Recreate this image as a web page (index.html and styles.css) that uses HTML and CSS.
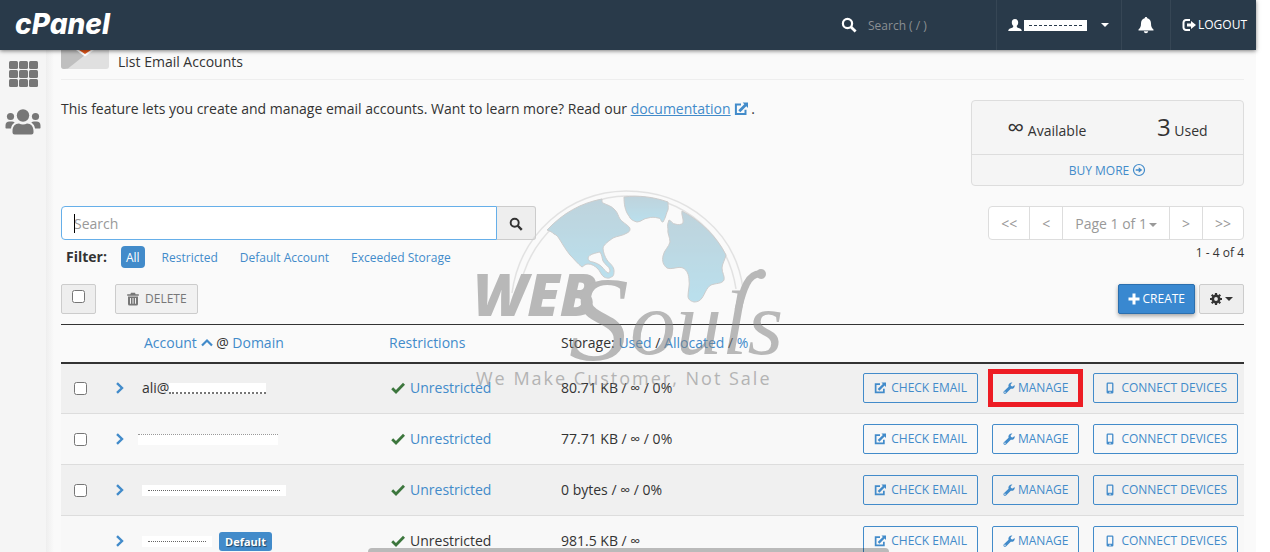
FILE: index.html
```html
<!DOCTYPE html>
<html lang="en">
<head>
  <meta charset="UTF-8">
  <meta name="viewport" content="width=device-width, initial-scale=1.0">
  <title>cPanel - List Email Accounts</title>
  <link rel="stylesheet" href="styles.css">
</head>
<body>
  <!-- Icon set -->
  <svg class="sprite" aria-hidden="true">
    <symbol id="i-search" viewBox="0 0 16 16"><circle cx="6.5" cy="6.5" r="4.6" fill="none" stroke="currentColor" stroke-width="2.2"/><path d="M10 10l4.6 4.6" stroke="currentColor" stroke-width="2.8"/></symbol>
    <symbol id="i-user" viewBox="0 0 14 14"><path d="M7 1c2.2 0 3.2 1.6 3.2 3.4 0 1.5-.6 2.6-1.4 3.4v.9c0 .5.4.8 1 1 2 .6 4 1.3 4 3.3H.2c0-2 2-2.7 4-3.3.6-.2 1-.5 1-1v-.9C4.4 7 3.8 5.9 3.8 4.4 3.8 2.6 4.8 1 7 1z" fill="currentColor"/></symbol>
    <symbol id="i-bell" viewBox="0 0 16 18"><path d="M8 1c.7 0 1.2.4 1.3 1.2C12 2.9 13 5 13 7.5c0 3.5 1 4.5 2.5 6v1H.5v-1C2 12 3 11 3 7.5c0-2.5 1-4.6 3.7-5.300C6.800 1.400 7.300 1 8 1zM5.800 15.300h4.400C10 16.600 9.200 17.300 8 17.300s-2-.7-2.200-2z" fill="currentColor"/></symbol>
    <symbol id="i-logout" viewBox="0 0 14 14"><path d="M8 2H4a2.500 2.500 0 0 0-2.500 2.500v5A2.500 2.500 0 0 0 4 12h4" fill="none" stroke="currentColor" stroke-width="2"/><path d="M5 5.500h4V3l5 4-5 4V8.500H5z" fill="currentColor"/></symbol>
    <symbol id="i-ext" viewBox="0 0 14 14"><path d="M7 2.500H1.900v9.600h9.600V7.800" fill="none" stroke="currentColor" stroke-width="2"/><path d="M4.300 8.200l6-6L8.700.6H14v5.300l-1.700-1.700-6 6z" fill="currentColor"/></symbol>
    <symbol id="i-wrench" viewBox="0 0 14 14"><path d="M13.500 3.400c.4 1.500 0 2.900-1.100 3.800-1 .8-2.200 1-3.300.6L3.500 13.300c-.7.7-1.800.7-2.500 0s-.7-1.700 0-2.400l5.500-5.500C6.100 4.200 6.400 2.800 7.400 1.800 8.500.7 9.800.4 11 .7L8.900 2.900l.4 1.900 2 .5zM2.300 11.200a.8.8 0 1 0 .01 1.600.8.8 0 0 0-.01-1.600z" fill="currentColor"/></symbol>
    <symbol id="i-phone" viewBox="0 0 14 14"><path d="M4.500.5h5a1.500 1.500 0 0 1 1.500 1.500v10a1.500 1.500 0 0 1-1.500 1.500h-5A1.500 1.500 0 0 1 3 12V2A1.500 1.500 0 0 1 4.500.5zM4.500 2v8.300h5V2zM7 11.200a.8.8 0 1 0 .01 1.600.8.8 0 0 0-.01-1.600z" fill="currentColor" fill-rule="evenodd"/></symbol>
    <symbol id="i-check" viewBox="0 0 14 12"><path d="M1.200 6.300l3.800 3.700 8-8.200" fill="none" stroke="currentColor" stroke-width="2.800"/></symbol>
    <symbol id="i-right" viewBox="0 0 10 12"><path d="M2 1.200L7 6l-5 4.800" fill="none" stroke="currentColor" stroke-width="2.400"/></symbol>
    <symbol id="i-up" viewBox="0 0 12 10"><path d="M1 7.500l5-5 5 5" fill="none" stroke="currentColor" stroke-width="2.200"/></symbol>
    <symbol id="i-circle-right" viewBox="0 0 14 14"><circle cx="7" cy="7" r="5.500" fill="none" stroke="currentColor" stroke-width="1.200"/><path d="M3.700 6.200h3V4.200L10.300 7 6.700 9.800v-2h-3z" fill="currentColor"/></symbol>
    <symbol id="i-trash" viewBox="0 0 14 14"><path d="M5 .8h4l.6 1.400h3.200v1.600H1.200V2.200h3.200zM2 4.600h10V12a1.500 1.500 0 0 1-1.500 1.500h-7A1.500 1.500 0 0 1 2 12zM4 6v5.800h1V6zm2.500 0v5.800h1V6zM9 6v5.800h1V6z" fill="currentColor" fill-rule="evenodd"/></symbol>
    <symbol id="i-plus" viewBox="0 0 12 12"><path d="M6 .5v11M.5 6h11" stroke="currentColor" stroke-width="3"/></symbol>
    <symbol id="i-cog" viewBox="0 0 12 12"><circle cx="6" cy="6" r="3.200" fill="none" stroke="currentColor" stroke-width="2.600"/><path d="M6 0v2M6 10v2M0 6h2M10 6h2M1.760 1.760l1.400 1.400M8.840 8.840l1.400 1.400M1.760 10.240l1.400-1.400M8.840 3.160l1.400-1.400" stroke="currentColor" stroke-width="2.200"/></symbol>
    <symbol id="i-grid" viewBox="0 0 29 26"><g fill="currentColor"><rect width="9" height="8" rx="1.500"/><rect x="10" width="9" height="8" rx="1.500"/><rect x="20" width="9" height="8" rx="1.500"/><rect y="9" width="9" height="8" rx="1.500"/><rect x="10" y="9" width="9" height="8" rx="1.500"/><rect x="20" y="9" width="9" height="8" rx="1.500"/><rect y="18" width="9" height="8" rx="1.500"/><rect x="10" y="18" width="9" height="8" rx="1.500"/><rect x="20" y="18" width="9" height="8" rx="1.500"/></g></symbol>
    <symbol id="i-users" viewBox="0 0 36 26"><g fill="currentColor"><circle cx="18" cy="6.500" r="6.200"/><circle cx="5.500" cy="7.500" r="3.600"/><circle cx="30.500" cy="7.500" r="3.600"/><path d="M7.500 25.500V22c0-4.500 2.500-7.500 6.500-7.500 1.200.7 2.500 1 4 1s2.800-.3 4-1c4 0 6.500 3 6.500 7.500v1.500a2 2 0 0 1-2 2h-17a2 2 0 0 1-2-2z"/><path d="M.5 19v-2.500c0-2.500 1.500-4 4-4H7c1 0 2 .4 2.700 1C7.500 15 6.300 16.800 6 19.500H1zM35.500 19v-2.500c0-2.500-1.500-4-4-4H29c-1 0-2 .4-2.700 1C28.500 15 29.700 16.800 30 19.500h5z"/></g></symbol>
  </svg>

  <header class="topbar">
    <a class="brand" href="#">cPanel</a>
    <label class="topbar-search">
      <svg class="icon icon-lg"><use href="#i-search"/></svg>
      <input type="text" placeholder="Search ( / )" aria-label="Quick search">
    </label>
    <a class="topbar-item topbar-user" href="#" aria-label="Account">
      <svg class="icon"><use href="#i-user"/></svg>
      <span class="masked masked-user"></span>
      <span class="caret"></span>
    </a>
    <a class="topbar-item topbar-bell" href="#" aria-label="Notifications"><svg class="icon icon-bell"><use href="#i-bell"/></svg></a>
    <a class="topbar-item topbar-logout" href="#"><svg class="icon"><use href="#i-logout"/></svg>LOGOUT</a>
  </header>

  <div class="layout">
    <nav class="sidebar">
      <a href="#" aria-label="Tools"><svg class="side-grid"><use href="#i-grid"/></svg></a>
      <a href="#" aria-label="User Manager"><svg class="side-users"><use href="#i-users"/></svg></a>
    </nav>

    <main class="content">
      <div class="page-title">
        <svg class="mail-icon" viewBox="0 0 48 20">
          <path d="M0 0h48v16a3 3 0 0 1-3 3H3a3 3 0 0 1-3-3z" fill="#e0e0e0"/>
          <path d="M0 0h18l6 5L7 18.500 3 19a3 3 0 0 1-3-3z" fill="#bfbfbf"/>
          <path d="M15 0h18l-9 6.500z" fill="#fff"/>
          <path d="M18 0h12l-6 4z" fill="#e8591c"/>
        </svg>
        <h1>List Email Accounts</h1>
      </div>

      <div class="intro">
        <p>This feature lets you create and manage email accounts. Want to learn more? Read our <a class="doc-link" href="#">documentation</a><svg class="icon doc-icon"><use href="#i-ext"/></svg> .</p>
        <div class="stats">
          <div class="stats-row">
            <div><span class="stat-num">∞</span> Available</div>
            <div><span class="stat-num">3</span> Used</div>
          </div>
          <a class="buy-more" href="#">BUY MORE <svg class="icon"><use href="#i-circle-right"/></svg></a>
        </div>
      </div>

      <div class="search-row">
        <div class="search-group">
          <input type="text" placeholder="Search" aria-label="Search accounts">
          <button type="button" aria-label="Search"><svg class="icon"><use href="#i-search"/></svg></button>
          <span class="text-cursor"></span>
        </div>
        <div class="pager">
          <button type="button">&lt;&lt;</button>
          <button type="button">&lt;</button>
          <button type="button">Page 1 of 1<span class="caret"></span></button>
          <button type="button">&gt;</button>
          <button type="button">&gt;&gt;</button>
        </div>
      </div>

      <div class="filter-row">
        <strong>Filter:</strong>
        <a class="active" href="#">All</a>
        <a href="#">Restricted</a>
        <a href="#">Default Account</a>
        <a href="#">Exceeded Storage</a>
        <span class="count">1 - 4 of 4</span>
      </div>

      <div class="toolbar">
        <label class="btn btn-grey select-all"><input type="checkbox" aria-label="Select all"></label>
        <button class="btn btn-grey btn-delete" type="button" disabled><svg class="icon"><use href="#i-trash"/></svg>DELETE</button>
        <button class="btn btn-primary" type="button"><svg class="icon icon-sm"><use href="#i-plus"/></svg>CREATE</button>
        <button class="btn btn-grey btn-cog" type="button" aria-label="Settings"><svg class="icon icon-sm"><use href="#i-cog"/></svg><span class="caret"></span></button>
      </div>

      <table class="accounts">
        <colgroup>
          <col class="c-check"><col class="c-expand"><col class="c-account"><col class="c-restrict"><col class="c-storage"><col>
        </colgroup>
        <thead>
          <tr>
            <th></th>
            <th></th>
            <th class="th-account"><a href="#">Account <svg class="icon icon-sm"><use href="#i-up"/></svg></a> @ <a href="#">Domain</a></th>
            <th><a href="#">Restrictions</a></th>
            <th>Storage: <a href="#">Used</a> / <a href="#">Allocated</a> / <a href="#">%</a></th>
            <th></th>
          </tr>
        </thead>
        <tbody>
          <tr>
            <td><input type="checkbox" aria-label="Select account"></td>
            <td><a class="expand" href="#" aria-label="Expand"><svg><use href="#i-right"/></svg></a></td>
            <td><div class="account">ali@<span class="masked masked-a"></span></div></td>
            <td><svg class="icon check"><use href="#i-check"/></svg><a href="#">Unrestricted</a></td>
            <td>80.71 KB / ∞ / 0%</td>
            <td>
              <div class="actions">
                <button class="btn btn-outline" type="button"><svg class="icon icon-sm"><use href="#i-ext"/></svg>CHECK EMAIL</button>
                <button class="btn btn-outline btn-manage marked" type="button"><svg class="icon icon-sm"><use href="#i-wrench"/></svg>MANAGE</button>
                <button class="btn btn-outline" type="button"><svg class="icon icon-sm"><use href="#i-phone"/></svg>CONNECT DEVICES</button>
              </div>
            </td>
          </tr>
          <tr>
            <td><input type="checkbox" aria-label="Select account"></td>
            <td><a class="expand" href="#" aria-label="Expand"><svg><use href="#i-right"/></svg></a></td>
            <td><div class="account"><span class="masked masked-b"></span></div></td>
            <td><svg class="icon check"><use href="#i-check"/></svg><a href="#">Unrestricted</a></td>
            <td>77.71 KB / ∞ / 0%</td>
            <td>
              <div class="actions">
                <button class="btn btn-outline" type="button"><svg class="icon icon-sm"><use href="#i-ext"/></svg>CHECK EMAIL</button>
                <button class="btn btn-outline btn-manage" type="button"><svg class="icon icon-sm"><use href="#i-wrench"/></svg>MANAGE</button>
                <button class="btn btn-outline" type="button"><svg class="icon icon-sm"><use href="#i-phone"/></svg>CONNECT DEVICES</button>
              </div>
            </td>
          </tr>
          <tr>
            <td><input type="checkbox" aria-label="Select account"></td>
            <td><a class="expand" href="#" aria-label="Expand"><svg><use href="#i-right"/></svg></a></td>
            <td><div class="account"><span class="masked masked-c"></span></div></td>
            <td><svg class="icon check"><use href="#i-check"/></svg><a href="#">Unrestricted</a></td>
            <td>0 bytes / ∞ / 0%</td>
            <td>
              <div class="actions">
                <button class="btn btn-outline" type="button"><svg class="icon icon-sm"><use href="#i-ext"/></svg>CHECK EMAIL</button>
                <button class="btn btn-outline btn-manage" type="button"><svg class="icon icon-sm"><use href="#i-wrench"/></svg>MANAGE</button>
                <button class="btn btn-outline" type="button"><svg class="icon icon-sm"><use href="#i-phone"/></svg>CONNECT DEVICES</button>
              </div>
            </td>
          </tr>
          <tr>
            <td></td>
            <td><a class="expand" href="#" aria-label="Expand"><svg><use href="#i-right"/></svg></a></td>
            <td><div class="account"><span class="masked masked-d"></span><span class="badge">Default</span></div></td>
            <td><svg class="icon check"><use href="#i-check"/></svg>Unrestricted</td>
            <td>981.5 KB / ∞</td>
            <td>
              <div class="actions">
                <button class="btn btn-outline" type="button"><svg class="icon icon-sm"><use href="#i-ext"/></svg>CHECK EMAIL</button>
                <button class="btn btn-outline btn-manage" type="button"><svg class="icon icon-sm"><use href="#i-wrench"/></svg>MANAGE</button>
                <button class="btn btn-outline" type="button"><svg class="icon icon-sm"><use href="#i-phone"/></svg>CONNECT DEVICES</button>
              </div>
            </td>
          </tr>
        </tbody>
      </table>
    </main>
  </div>

  <!-- Watermark over the page -->
  <svg class="watermark" viewBox="0 0 320 210" aria-hidden="true">
    <defs>
      <linearGradient id="land" x1="0" y1="0" x2="0" y2="1">
        <stop offset="0" stop-color="#8fb4c4"/>
        <stop offset="1" stop-color="#86cbe4"/>
      </linearGradient>
    </defs>
    <g fill="none" stroke="#d0d0d0" stroke-width="1.500">
      <path d="M37 103C45 44 93 2 151 1c62 0 110 42 117 98"/>
      <path d="M44 103C52 50 97 7 152 6c58 0 101 40 109 93"/>
    </g>
    <g fill="url(#land)" stroke="#a8a8a8" stroke-width="1" stroke-linejoin="round">
      <path fill-rule="evenodd" d="M72 40C88 23 106 13 127 9c0 3 0 3 1 4 4 2 9 3 12 7 3 3 3 6 5 9 3 4 10 7 10 10 0 2-1 3-3 4-5 3-10 3-14 5-4 3-9 6-10 10 0 4 2 9 4 12 3 4 7 6 7 11 0 4-1 6-3 6-2 2-5 1-7 0-3-2-4-6-6-8-3-3-6-5-10-5-3 0-4 2-6 3-4-3-8-8-12-12-4-5-7-10-10-15-2-3-3-5-6-6-2-2-4-3-7-4zM113 68c1-4 8-5 12-6 2 3 2 6 3 9 2 4 6 5 7 9 0 2-1 3-2 3-2-1-4-4-6-6-3-3-6-4-9-5-3 0-5-2-5-4z"/>
      <path d="M149 7c15-2 30 0 44 5 0 5 1 7-1 10-1 3-2 7-4 10-3 0-1-4-5-4-3-1-7-1-10 0-4 0-7 4-11 4-4-1-7-3-8-6-4-5-5-12-5-19z"/>
      <path d="M207 21c19 10 35 26 44 44-1 5-4 9-4 13 0 5 3 8 2 12-2 4-8 3-13 5-5 3-6 9-9 13-2 3-5 4-8 4-4-1-6-3-6-6 0-5 2-11 1-16 0-5-2-10-6-12-5-2-11 2-16 0-4-3-5-7-4-12 1-6 6-9 7-14 0-5-3-9-2-13-1-4 0-6 1-9 3 1 3 4 6 4 3 1 6 1 8-1 1-4-2-8-1-12z"/>
    </g>
    <g fill="#838383">
      <text class="wm-web" x="-2" y="126">WEB</text>
      <text class="wm-s" x="94" y="170">S</text>
      <text class="wm-ouls" x="155" y="164">ouls</text>
    </g>
    <path d="M263 120c5-20 10-38 24-36" fill="none" stroke="#838383" stroke-width="7"/>
    <circle cx="286" cy="84" r="5" fill="#838383"/>
    <text class="wm-tag" x="1" y="195" fill="#838383">We Make Customer, Not Sale</text>
  </svg>
  <div class="bottom-shade"></div>
</body>
</html>
```
FILE: styles.css
```css
* {
  box-sizing: border-box;
}

body {
  margin: 0;
  padding-right: 14px;
  height: 100vh;
  overflow: hidden;
  display: flex;
  flex-direction: column;
  background: #fff;
  color: #333;
  font-family: "Open Sans", sans-serif;
  font-size: 14px;
  line-height: 20px;
}

a {
  color: #428bca;
  text-decoration: none;
}

button,
input {
  font-family: inherit;
  font-size: inherit;
}

input[type="checkbox"] {
  width: 13px;
  height: 13px;
  margin: 0;
}

.sprite {
  display: none;
}

.icon {
  width: 14px;
  height: 14px;
  flex: none;
  vertical-align: -2px;
}

.icon-sm {
  width: 12px;
  height: 12px;
  vertical-align: -1px;
}

.icon-lg {
  width: 16px;
  height: 16px;
}

.caret {
  display: inline-block;
  border: 4px solid transparent;
  border-top-color: currentColor;
  border-bottom: 0;
}

/* Top bar */
.topbar {
  position: relative;
  z-index: 2;
  flex: none;
  display: flex;
  align-items: stretch;
  height: 50px;
  background: #293a4a;
  box-shadow: 0 1px 4px rgba(0, 0, 0, 0.5);
}

.brand {
  margin-right: auto;
  padding-left: 15px;
  color: #fff;
  font-family: Inter, sans-serif;
  font-size: 28px;
  font-style: italic;
  font-weight: 800;
  line-height: 48px;
}

.topbar-search {
  display: flex;
  align-items: center;
  gap: 11px;
  width: 155px;
  color: #fff;
}

.topbar-search input {
  width: 110px;
  padding: 0;
  border: 0;
  background: none;
  color: #fff;
  font-size: 12px;
}

.topbar-search input::placeholder {
  color: #8b8f93;
}

.topbar-item {
  display: flex;
  align-items: center;
  padding: 0 11px;
  border-left: 1px solid #364655;
  color: #fff;
  font-size: 12px;
}

.topbar-user {
  width: 125px;
}

.topbar-user .caret {
  margin-left: 14px;
}

.topbar-bell {
  width: 49px;
  padding: 0 16px;
}

.icon-bell {
  width: 16px;
  height: 18px;
}

.topbar-logout {
  gap: 2px;
  width: 86px;
  padding-right: 0;
}

/* Hidden account names */
.masked {
  flex: none;
  height: 11px;
  background: #fff;
}

.masked-user {
  display: flex;
  align-items: center;
  width: 63px;
  margin-left: 2px;
}

.masked-user::before {
  content: "";
  flex: 1;
  margin: 0 5px;
  border-top: 1px dashed #293a4a;
}

.masked-a {
  width: 97px;
  border-bottom: 2px dotted #777;
}

.masked-b {
  width: 140px;
  margin-left: -4px;
  border-top: 1px dotted #999;
}

.masked-c,
.masked-d {
  display: flex;
  align-items: center;
  width: 144px;
}

.masked-d {
  width: 70px;
}

.masked-c::before,
.masked-d::before {
  content: "";
  flex: 1;
  margin: 0 6px;
  border-top: 1px dotted #666;
}

/* Layout */
.layout {
  flex: 1;
  min-height: 0;
  display: flex;
}

.sidebar {
  flex: none;
  display: flex;
  flex-direction: column;
  align-items: center;
  gap: 22px;
  width: 46px;
  padding-top: 11px;
  background: #f5f5f5;
  box-shadow: 1px 0 5px rgba(0, 0, 0, 0.35);
}

.sidebar a {
  display: flex;
  color: #777;
}

.side-grid {
  width: 29px;
  height: 26px;
}

.side-users {
  width: 36px;
  height: 26px;
}

.content {
  flex: 1;
  min-width: 0;
  padding: 0 12px 0 15px;
  background: linear-gradient(90deg, #eee, #fafafa 8px);
}

.page-title {
  display: flex;
  align-items: flex-start;
  gap: 9px;
  height: 30px;
  border-bottom: 1px solid #eee;
}

.page-title h1 {
  margin: 2px 0 0;
  font-size: 14px;
  font-weight: 400;
}

.mail-icon {
  width: 48px;
  height: 20px;
}

.intro {
  display: flex;
  justify-content: space-between;
  align-items: flex-start;
  padding: 19px 0 20px;
}

.intro p {
  margin: 0;
}

.doc-link {
  text-decoration: underline;
}

.doc-icon {
  margin-left: 3px;
  color: #428bca;
}

.stats {
  width: 273px;
  margin-top: 1px;
  border: 1px solid #ddd;
  border-radius: 4px;
  background: #f5f5f5;
}

.stats-row {
  display: flex;
  justify-content: space-around;
  align-items: center;
  height: 54px;
  padding-top: 2px;
  border-bottom: 1px solid #ddd;
}

.stat-num {
  font-size: 24px;
}

.buy-more {
  display: block;
  padding: 6px 0 4px;
  font-size: 12px;
  text-align: center;
}

/* Search and pager */
.search-row {
  display: flex;
  justify-content: space-between;
}

.search-group {
  position: relative;
  display: flex;
  width: 475px;
  height: 34px;
}

.search-group input {
  flex: 1;
  min-width: 0;
  padding: 0 12px;
  border: 1px solid #66afe9;
  border-radius: 4px 0 0 4px;
  background: #fff;
}

.search-group input::placeholder {
  color: #999;
}

.search-group button {
  width: 39px;
  padding: 0;
  border: 1px solid #ccc;
  border-left: 0;
  border-radius: 0 3px 3px 0;
  background: #eee;
  color: #333;
}

/* Insertion point */
.text-cursor {
  position: absolute;
  top: 8px;
  left: 13px;
  width: 1px;
  height: 19px;
  background: #000;
}

.pager {
  display: flex;
  border: 1px solid #ddd;
  border-radius: 4px;
  background: #fff;
}

.pager button {
  padding: 0 12px;
  border: 0;
  border-left: 1px solid #ddd;
  background: none;
  color: #999;
}

.pager button:first-child {
  border-left: 0;
}

.pager .caret {
  margin-left: 2px;
  vertical-align: 2px;
}

.filter-row {
  display: flex;
  align-items: center;
  gap: 12px;
  padding: 6px 0 0 5px;
  font-size: 12px;
}

.filter-row strong {
  font-size: 14px;
}

.filter-row a {
  padding: 2px 5px 0;
  border-radius: 4px;
}

.filter-row .active {
  margin-left: 2px;
  background: #428bca;
  color: #fff;
}

.count {
  align-self: flex-start;
  margin-left: auto;
  line-height: 14px;
}

/* Buttons */
.btn {
  display: inline-flex;
  align-items: center;
  justify-content: center;
  gap: 5px;
  height: 30px;
  padding: 0 10px;
  border: 1px solid #ccc;
  border-radius: 2px;
  font-size: 12px;
  line-height: 18px;
  white-space: nowrap;
}

.btn-grey {
  background: #eee;
  color: #333;
}

.btn-primary {
  gap: 3px;
  margin-left: auto;
  padding: 0 9px;
  border-color: #2b6fae;
  background: #3988d0;
  color: #fff;
  box-shadow: 0 2px 4px rgba(0, 0, 0, 0.35);
}

.btn-outline {
  border-color: #428bca;
  background: transparent;
  color: #428bca;
}

.btn-manage {
  gap: 3px;
}

.btn-delete {
  margin-left: 15px;
  background: #f1f1f1;
  color: #777;
}

.btn-cog {
  gap: 3px;
}

.marked {
  border-radius: 0;
  outline: 5px solid #ed1c24;
  outline-offset: -1px;
}

.toolbar {
  display: flex;
  gap: 4px;
  padding: 16px 0 10px;
}

.select-all {
  width: 35px;
  align-items: flex-start;
  padding-top: 5px;
}

/* Accounts table */
.accounts {
  width: 100%;
  table-layout: fixed;
  border-collapse: collapse;
  border-top: 1px solid #333;
}

.c-check {
  width: 48px;
}

.c-expand {
  width: 33px;
}

.c-account {
  width: 247px;
}

.c-restrict {
  width: 172px;
}

.c-storage {
  width: 200px;
}

.accounts th {
  height: 38px;
  padding: 0;
  border-bottom: 2px solid #333;
  font-weight: 400;
  text-align: left;
}

.accounts .th-account {
  padding-left: 2px;
}

.accounts td {
  height: 51px;
  padding: 0;
  border-bottom: 1px solid #ddd;
}

.accounts tbody tr {
  background: #f8f8f8;
}

.accounts tbody tr:nth-child(odd) {
  background: #f0f0f0;
}

.accounts td:first-child {
  padding-left: 13px;
}

.accounts td input {
  display: block;
}

.expand {
  display: flex;
  padding-left: 6px;
}

.expand svg {
  width: 10px;
  height: 12px;
}

.account {
  display: flex;
  align-items: center;
}

.check {
  margin: 0 5px 0 2px;
  color: #3c763d;
}

.actions {
  display: flex;
  justify-content: flex-end;
  gap: 14px;
  padding-right: 6px;
}

.badge {
  margin-left: 7px;
  padding: 0 6px;
  border-radius: 3px;
  background: #428bca;
  color: #fff;
  font-size: 11px;
  font-weight: 700;
  line-height: 19px;
  text-shadow: 1px 1px 1px rgba(0, 0, 0, 0.5);
}

/* Overlays */
.watermark {
  position: absolute;
  top: 190px;
  left: 475px;
  z-index: 3;
  width: 320px;
  height: 210px;
  opacity: 0.55;
  pointer-events: none;
}

.wm-web {
  font: italic 800 58px "Open Sans", sans-serif;
}

.wm-s {
  font: italic 120px "Liberation Serif", serif;
}

.wm-ouls {
  font: italic 92px "Liberation Serif", serif;
}

.wm-tag {
  font: 18px "Open Sans", sans-serif;
  letter-spacing: 2px;
}

.bottom-shade {
  position: fixed;
  bottom: 0;
  left: 29%;
  right: 30%;
  z-index: 4;
  height: 4px;
  border-radius: 8px 8px 0 0;
  background: rgba(0, 0, 0, 0.25);
}
```
